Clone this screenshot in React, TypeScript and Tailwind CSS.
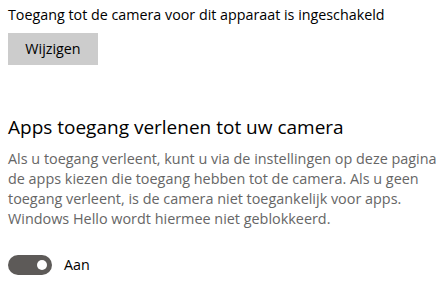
export default function App() {
  return (
    <div
      className="w-[448px] h-[295px] bg-white text-black px-2 pt-[5px]"
      style={{ fontFamily: '"Segoe UI", "Open Sans", "Noto Sans", sans-serif' }}
    >
      <div className="text-[14.3px] leading-5">Toegang tot de camera voor dit apparaat is ingeschakeld</div>

      <button className="mt-[8px] w-[90px] h-8 bg-[#cccccc] text-[14.3px] text-black">Wijzigen</button>

      <div className="mt-[48px] text-[19px] leading-7">Apps toegang verlenen tot uw camera</div>

      <p className="mt-[8px] text-[14.4px] leading-5 text-[#666666] w-[436px]">
        Als u toegang verleent, kunt u via de instellingen op deze pagina de apps kiezen die toegang hebben tot de
        camera. Als u geen toegang verleent, is de camera niet toegankelijk voor apps. Windows Hello wordt hiermee
        niet geblokkeerd.
      </p>

      <div className="mt-[25px] flex items-center gap-3">
        <div className="w-11 h-5 rounded-full bg-[#5d5a58] flex items-center justify-end pr-[5px]">
          <div className="w-[10px] h-[10px] rounded-full bg-white" />
        </div>
        <span className="text-[14.3px]">Aan</span>
      </div>
    </div>
  );
}
